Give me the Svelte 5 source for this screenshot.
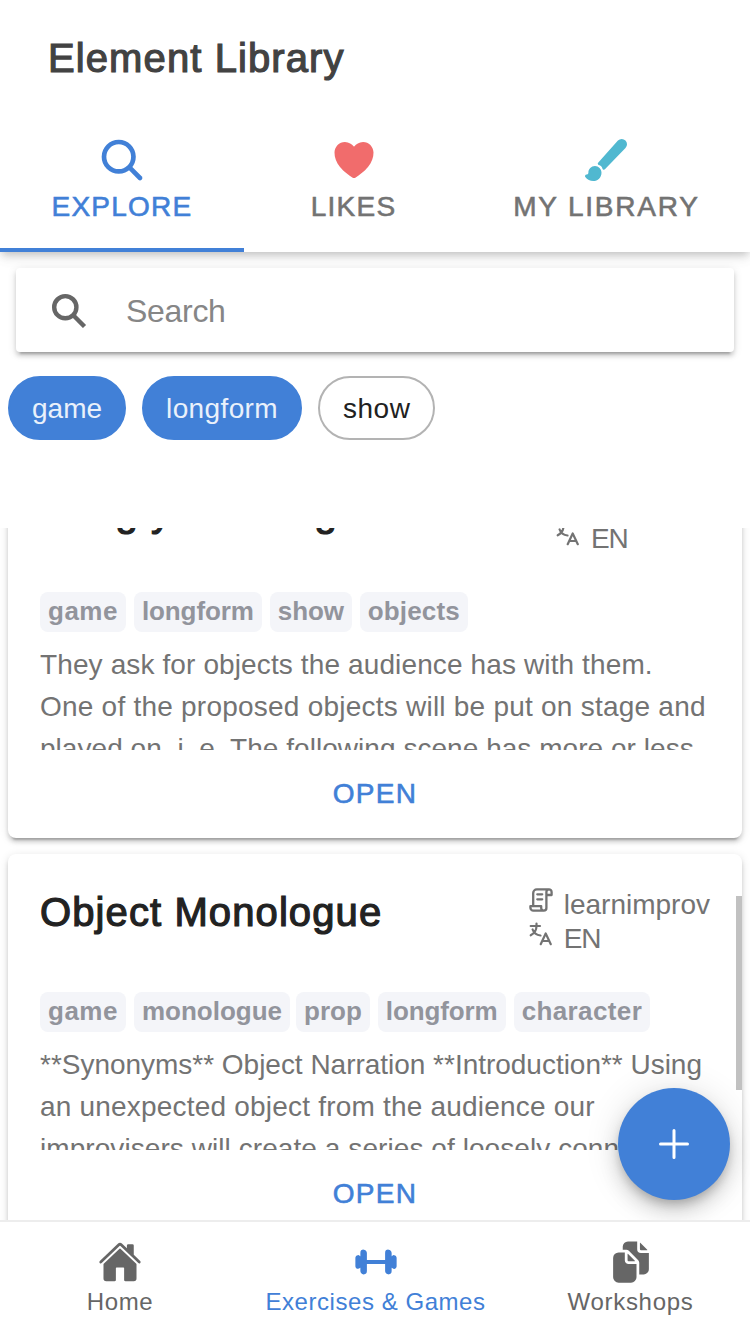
<script>
  const tabs = [
    { id: 'explore', label: 'EXPLORE', width: 244 },
    { id: 'likes', label: 'LIKES', width: 217 },
    { id: 'mine', label: 'MY LIBRARY', width: 289 }
  ];
  const chips = [
    { t: 'game', on: true, s: 0 },
    { t: 'longform', on: true, s: 0.38 },
    { t: 'show', on: false, s: 0.5 }
  ];
  const cards = [
    {
      title: 'Bring your things',
      source: 'improwiki',
      tags: [['game', 0.5], ['longform', -0.1], ['show', -0.1], ['objects', 0.13]],
      lines: [['They ask for objects the audience has with them.', 0.12], ['One of the proposed objects will be put on stage and', 0.23], ['played on, i. e. The following scene has more or less', 0.04]]
    },
    {
      title: 'Object Monologue',
      source: 'learnimprov',
      tags: [['game', 0.5], ['monologue', 0], ['prop', 0], ['longform', -0.1], ['character', 0.38]],
      lines: [['**Synonyms** Object Narration **Introduction** Using', -0.02], ['an unexpected object from the audience our', 0.2], ['improvisers will create a series of loosely connected', 0.07]]
    }
  ];
</script>

<div class="page">
  <header>
    <h1>Element Library</h1>
    <nav class="tabs">
      {#each tabs as tab}
        <div class="tab {tab.id}" style="width:{tab.width}px">
          {#if tab.id === 'explore'}
            <svg width="48" height="48" viewBox="0 0 512 512"><path d="M221.09 64a157.09 157.09 0 10157.09 157.09A157.1 157.1 0 00221.09 64z" fill="none" stroke="currentColor" stroke-width="50" /><path d="M338.29 338.29L448 448" fill="none" stroke="currentColor" stroke-linecap="round" stroke-width="50" /></svg>
          {:else if tab.id === 'likes'}
            <svg width="48" height="48" viewBox="0 0 512 512" fill="#f16c6c"><path d="M256 448a32 32 0 01-18-5.57c-78.59-53.35-112.62-89.93-131.39-112.8-40-48.75-59.15-98.8-58.61-153C48.63 114.52 98.46 64 159.08 64c44.08 0 74.61 24.83 92.39 45.51a6 6 0 009.06 0C278.31 88.81 308.84 64 352.92 64c60.62 0 110.45 50.52 111.08 112.64.54 54.21-18.63 104.26-58.61 153-18.77 22.87-52.8 59.45-131.39 112.8A32 32 0 01256 448z" /></svg>
          {:else}
            <svg width="48" height="48" viewBox="0 0 512 512" fill="#50b8d0"><path d="M233.15 360.11a15.7 15.7 0 01-4.92-.77 16 16 0 01-10.92-13c-2.15-15-19.95-32.46-36.62-35.85A16 16 0 01172 284.16L383.09 49.06c.19-.22.39-.43.59-.63a56.57 56.57 0 0179.89 0 56.51 56.51 0 01.11 79.78l-219 227a16 16 0 01-11.54 4.9zM119.89 480.11c-32.14 0-65.45-16.89-84.85-43a16 16 0 0112.85-25.54c5.34 0 20-4.87 20-20.57 0-39.07 31.4-70.86 70-70.86s70 31.79 70 70.86c0 49.12-39.48 89.11-88 89.11z" /></svg>
          {/if}
          <span>{tab.label}</span>
        </div>
      {/each}
    </nav>
  </header>

  <div class="search">
    <svg width="36" height="36" viewBox="0 0 36 36" fill="none" stroke="#666" stroke-width="4.4"><circle cx="14.3" cy="15.2" r="11.1" /><path d="M22 23L33.500 34.500" /></svg>
    <span>Search</span>
  </div>

  <div class="chips">
    {#each chips as c}
      <span class="chip" class:on={c.on} style="letter-spacing:{c.s}px">{c.t}</span>
    {/each}
  </div>

  <main>
    <div class="list">
      {#each cards as card, i}
        <article>
          <div class="top">
            <h2>{card.title}</h2>
            <div class="meta" class:short={i === 0}>
              <div class="row">
                <svg width="24" height="24" viewBox="0 0 24 24" fill="none" stroke="currentColor" stroke-width="2.3" stroke-linecap="round" stroke-linejoin="round"><path d="M4.200 18V5A3.600 3.600 0 0 1 7.800 1.400H20A2.600 2.600 0 0 1 22.600 4V7H17.400M20 1.400A2.600 2.600 0 0 0 17.400 4V20A2.600 2.600 0 0 1 12.200 20V18.200H1.400V19.500A3 3 0 0 0 4.400 22.600H15M8.300 6.300H13.200M8.300 11.300H13.200" /></svg>
                <span>{card.source}</span>
              </div>
              <div class="row">
                <svg width="24" height="24" viewBox="0 0 24 24" fill="none" stroke="currentColor" stroke-width="2.2" stroke-linecap="round" stroke-linejoin="round"><path d="M1.700 4H11M7.500 1.500V4C7.500 8.500 5 11.500 1.700 13.300M3.600 7.500C4.800 11 7.500 13 11.500 13.500M11.700 22.200L16.700 11.500L21.800 22.200M13.300 19H20.200" /></svg>
                <span class="lang">EN</span>
              </div>
            </div>
          </div>
          <div class="tags">
            {#each card.tags as [t, s]}
              <span class={t} style="letter-spacing:{s}px">{t}</span>
            {/each}
          </div>
          <div class="text">
            {#each card.lines as [t, s]}
              <div style="letter-spacing:{s}px">{t}</div>
            {/each}
          </div>
          <div class="open">OPEN</div>
        </article>
      {/each}
    </div>
    <div class="thumb"></div>
    <div class="fab">
      <svg width="48" height="48" viewBox="0 0 512 512"><path fill="none" stroke="#fff" stroke-linecap="round" stroke-width="32" d="M256 112v288M400 256H112" /></svg>
    </div>
  </main>

  <footer>
    <div class="item">
      <svg width="44" height="44" viewBox="0 0 512 512" fill="currentColor"><path d="M261.56 101.28a8 8 0 00-11.06 0L66.4 277.15a8 8 0 00-2.47 5.79L63.9 448a32 32 0 0032 32H192a16 16 0 0016-16V328a8 8 0 018-8h80a8 8 0 018 8v136a16 16 0 0016 16h96.06a32 32 0 0032-32V282.94a8 8 0 00-2.47-5.79z" /><path d="M490.91 244.15l-74.8-71.56V64a16 16 0 00-16-16h-48a16 16 0 00-16 16v32l-57.92-55.38C272.77 35.14 264.71 32 256 32c-8.68 0-16.72 3.14-22.14 8.63l-212.7 203.5c-6.22 6-7 15.87-1.34 22.37A16 16 0 0043 267.56L250.5 69.28a8 8 0 0111.06 0l207.52 198.28a16 16 0 0022.59-.44c6.14-6.36 5.63-16.86-.76-22.97z" /></svg>
      <span>Home</span>
    </div>
    <div class="item active">
      <svg width="44" height="44" viewBox="0 0 512 512" fill="currentColor"><path d="M467 176a29.94 29.94 0 00-25.32 12.5 2 2 0 01-3.64-1.14V150.71c0-20.75-16.34-38.21-37.08-38.7A38 38 0 00362 150v82a2 2 0 01-2 2H152a2 2 0 01-2-2v-81.29c0-20.75-16.34-38.21-37.08-38.7A38 38 0 0074 150v37.38a2 2 0 01-3.64 1.14A29.94 29.94 0 0045 176c-16.3.51-29 14.31-29 30.62v98.72c0 16.31 12.74 30.11 29 30.62a29.94 29.94 0 0025.32-12.5A2 2 0 0174 324.62v36.67C74 382 90.34 399.5 111.08 400A38 38 0 00150 362v-82a2 2 0 012-2h208a2 2 0 012 2v81.29c0 20.75 16.34 38.21 37.08 38.7A38 38 0 00438 362v-37.38a2 2 0 013.64-1.14A29.94 29.94 0 00467 336c16.3-.51 29-14.31 29-30.62v-98.74c0-16.31-12.74-30.11-29-30.64z" /></svg>
      <span>Exercises &amp; Games</span>
    </div>
    <div class="item last">
      <svg width="44" height="44" viewBox="0 0 512 512" fill="currentColor"><path d="M298.39 248a4 4 0 002.86-6.8l-78.4-79.72a4 4 0 00-6.85 2.81V236a12 12 0 0012 12z" /><path d="M197 267a43.67 43.67 0 01-13-31v-92h-72a64.19 64.19 0 00-64 64v224a64 64 0 0064 64h144a64 64 0 0064-64V280h-92a43.61 43.61 0 01-31-13zM372 120h70.39a4 4 0 002.86-6.8l-78.4-79.72a4 4 0 00-6.85 2.81V108a12 12 0 0012 12z" /><path d="M372 152a44.34 44.34 0 01-44-44V16H220a60.07 60.07 0 00-60 60v36h42.12A40.81 40.81 0 01231 124.14l109.16 111a41.11 41.11 0 0111.83 29V400h53.05c32.51 0 58.95-26.92 58.95-60V152z" /></svg>
      <span>Workshops</span>
    </div>
  </footer>
</div>

<style>
  :global(body) { margin: 0; background: #fff; }
  .page {
    width: 750px; height: 1334px; overflow: hidden; display: flex; flex-direction: column;
    background: #fff; color: #737373; font-family: "Liberation Sans", Arial, sans-serif; white-space: nowrap;
  }
  svg { display: block; flex: none; }
  header {
    height: 252px; flex: none; background: #fff;
    box-shadow: 0 4px 8px -2px rgba(0,0,0,.2), 0 8px 10px rgba(0,0,0,.04), 0 2px 20px rgba(0,0,0,.06);
  }
  h1 {
    margin: 0; height: 112px; padding: 1px 0 0 48px; line-height: 114px; box-sizing: border-box;
    font-size: 40px; font-weight: 400; letter-spacing: 1.1px; color: #424242; -webkit-text-stroke: 1.2px #424242;
  }
  .tabs { display: flex; height: 140px; }
  .tab {
    box-sizing: border-box; display: flex; flex-direction: column; align-items: center; padding-top: 24px;
    font-size: 28px; line-height: 32px; letter-spacing: 1.25px; -webkit-text-stroke: .6px currentColor;
  }
  .tab span { margin-top: 7px; }
  .explore { color: #4180d7; border-bottom: 4px solid #4180d7; }
  .likes { padding-left: 2px; }
  .mine { letter-spacing: 1.8px; }
  .mine span { margin-left: 2px; }
  .search {
    margin: 16px 16px 0; height: 84px; flex: none; border-radius: 4px; background: #fff; display: flex; align-items: center;
    padding-left: 35px; gap: 39px; font-size: 32px; color: #868686; letter-spacing: -.3px;
    box-shadow: 0 6px 2px -4px rgba(0,0,0,.2), 0 4px 4px rgba(0,0,0,.14), 0 2px 10px rgba(0,0,0,.12);
  }
  .search span { padding-top: 2px; }
  .chips { display: flex; gap: 16px; padding: 24px 8px 0; height: 152px; flex: none; box-sizing: content-box; }
  .chips { box-sizing: border-box; height: 176px; }
  .chip {
    height: 64px; line-height: 61px; border-radius: 32px; padding: 0 23px; border: 2px solid #b3b3b3;
    box-sizing: border-box; font-size: 28px; color: #212121;
  }
  .chip.on { background: #4180d7; border-color: #4180d7; color: #e9f1fb; padding: 0 22px; }
  main { position: relative; height: 692px; flex: none; overflow: hidden; }
  .list { margin-top: -74px; padding: 0 8px; display: flex; flex-direction: column; gap: 16px; }
  article {
    height: 384px; box-sizing: border-box; padding: 32px; border-radius: 8px; background: #fff;
    box-shadow: 0 6px 2px -4px rgba(0,0,0,.2), 0 4px 4px rgba(0,0,0,.14), 0 2px 10px rgba(0,0,0,.12);
  }
  .top { display: flex; justify-content: space-between; height: 106px; }
  h2 { margin: 3px 0 0; font-size: 40px; line-height: 46px; font-weight: 400; color: #222; -webkit-text-stroke: 1.2px #222; letter-spacing: 1.1px; }
  .meta { font-size: 28px; line-height: 34px; padding-top: 2px; }
  .meta.short { width: 154px; }
  .row { display: flex; gap: 11px; height: 34px; }
  .lang { letter-spacing: -1.2px; }
  .tags { display: flex; gap: 8px; }
  .tags span {
    height: 40px; line-height: 38px; padding: 0 8px; border-radius: 8px; background: #f4f5f9; color: #92949c;
    font-size: 26px; font-weight: 700;
  }
  .tags .monologue { margin-right: -2px; }
  .text { margin-top: 12px; height: 106px; overflow: hidden; font-size: 28px; line-height: 42px; }
  .text div { height: 42px; }
  .open { margin-top: 28px; text-align: center; font-size: 28px; line-height: 32px; letter-spacing: 1.3px; color: #4180d7; -webkit-text-stroke: .6px #4180d7; }
  .thumb { position: absolute; left: 736px; top: 368px; width: 6px; height: 194px; background: #c1c1c1; }
  .fab {
    position: absolute; left: 618px; top: 560px; width: 112px; height: 112px; border-radius: 50%; background: #4180d7;
    display: flex; align-items: center; justify-content: center;
    box-shadow: 0 6px 10px -2px rgba(0,0,0,.2), 0 12px 20px rgba(0,0,0,.14), 0 2px 36px rgba(0,0,0,.12);
  }
  footer { height: 114px; flex: none; box-sizing: border-box; border-top: 2px solid #ededed; background: #fff; display: flex; color: #666; }
  .item { display: flex; flex-direction: column; align-items: center; padding-top: 18px; width: 240px; font-size: 24px; line-height: 28px; letter-spacing: .6px; }
  .item span { margin-top: 4px; }
  .active { color: #4180d7; width: 271px; letter-spacing: .55px; }
  .last { width: 239px; letter-spacing: .7px; }
</style>
